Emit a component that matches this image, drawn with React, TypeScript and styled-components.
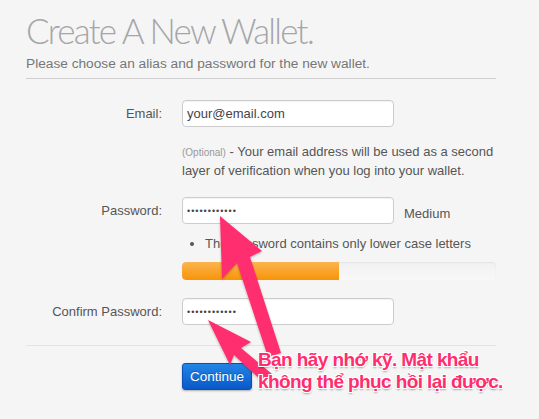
import styled, { createGlobalStyle } from "styled-components";

const GlobalStyle = createGlobalStyle`
  html, body {
    margin: 0;
    padding: 0;
    background: #f5f5f5;
  }
  body {
    font-family: "Liberation Sans", Arial, sans-serif;
    width: 539px;
    height: 419px;
    overflow: hidden;
  }
`;

export default function App() {
  return (
    <>
      <GlobalStyle />
      <Page>
        <Title>Create A New Wallet.</Title>
        <Subtitle>Please choose an alias and password for the new wallet.</Subtitle>
        <Rule />

        <Form>
          <Row>
            <Label>Email:</Label>
            <Input type="text" defaultValue="your@email.com" />
          </Row>

          <Help>
            <Muted>(Optional)</Muted> - Your email address will be used as a second
            <br />
            layer of verification when you log into your wallet.
          </Help>

          <Row $top={17}>
            <Label>Password:</Label>
            <FieldLine>
              <Input type="password" defaultValue="abcdefghijkl" $secret />
              <Strength>Medium</Strength>
            </FieldLine>
          </Row>

          <Tips>
            <li>The password contains only lower case letters</li>
          </Tips>

          <Progress>
            <Bar style={{ width: "50%" }} />
          </Progress>

          <Row $top={18}>
            <Label>Confirm Password:</Label>
            <Input type="password" defaultValue="abcdefghijkl" $secret />
          </Row>
        </Form>

        <Rule $light />

        <Actions>
          <Button>Continue</Button>
        </Actions>

        <Arrows width="539" height="419" viewBox="0 0 539 419">
          <defs>
            <filter id="sh" x="-20%" y="-20%" width="140%" height="140%">
              <feDropShadow dx="0" dy="1" stdDeviation="1.2" floodColor="#000" floodOpacity="0.3" />
            </filter>
          </defs>
          <g fill="#ff2d6e" filter="url(#sh)">
            <path d="M220 216 L262 251 L250 257 L281 353 L268 357 L237 263 L222 279 Z" />
            <path d="M208 320 L251 342 L241 348 L272 374 L264 383 L234 355 L230 365 Z" />
          </g>
        </Arrows>

        <Note>
          Bạn hãy nhớ kỹ. Mật khẩu
          <br />
          không thể phục hồi lại được.
        </Note>
      </Page>
    </>
  );
}

const Page = styled.div`
  position: relative;
  padding: 10px 43px 0 26px;
  height: 419px;
  box-sizing: border-box;
`;

const Title = styled.h1`
  margin: 0;
  font-family: Lato, Roboto, "Liberation Sans", sans-serif;
  font-weight: 300;
  font-size: 35px;
  line-height: 40px;
  color: #a6a6a8;
  letter-spacing: -1.8px;
`;

const Subtitle = styled.p`
  margin: 5px 0 0;
  font-size: 13.7px;
  line-height: 18px;
  color: #777;
`;

const Rule = styled.div<{ $light?: boolean }>`
  height: 1px;
  margin-top: ${(p) => (p.$light ? "20px" : "5px")};
  background: ${(p) => (p.$light ? "#e3e3e3" : "#cfcfcf")};
`;

const Form = styled.div`
  display: flex;
  flex-direction: column;
  padding-top: 21px;
`;

const Row = styled.div<{ $top?: number }>`
  display: grid;
  grid-template-columns: 136px 1fr;
  column-gap: 20px;
  align-items: center;
  margin-top: ${(p) => p.$top ?? 0}px;
`;

const Label = styled.label`
  text-align: right;
  font-size: 13px;
  color: #555;
`;

const FieldLine = styled.div`
  display: flex;
  align-items: center;
  gap: 10px;
`;

const Input = styled.input<{ $secret?: boolean }>`
  width: 212px;
  height: 27px;
  box-sizing: border-box;
  padding: 0 4px;
  border: 1px solid #cccccc;
  border-radius: 4px;
  background: #fff;
  font-family: "Liberation Sans", Arial, sans-serif;
  font-size: ${(p) => (p.$secret ? "9px" : "13px")};
  letter-spacing: ${(p) => (p.$secret ? "1px" : "0")};
  color: #444;
  box-shadow: inset 0 1px 1px rgba(0, 0, 0, 0.05);
  outline: none;
`;

const Strength = styled.span`
  font-size: 13px;
  color: #555;
  padding-top: 6px;
`;

const Help = styled.p`
  margin: 16px 0 0 156px;
  font-size: 13px;
  line-height: 18px;
  color: #555;
  white-space: nowrap;
`;

const Muted = styled.span`
  font-size: 10px;
  color: #999;
`;

const Tips = styled.ul`
  margin: 11px 0 0 156px;
  padding: 0 0 0 23px;
  font-size: 13px;
  line-height: 18px;
  color: #555;

  li {
    margin: 0;
  }
`;

const Progress = styled.div`
  margin: 9px 0 0 156px;
  height: 18px;
  border-radius: 4px;
  background: linear-gradient(#f1f1f1, #f8f8f8);
  box-shadow: inset 0 1px 2px rgba(0, 0, 0, 0.06);
  overflow: hidden;
`;

const Bar = styled.div`
  height: 100%;
  background: linear-gradient(#fbb450, #f89406);
  border-radius: 4px 0 0 4px;
`;

const Actions = styled.div`
  padding: 17px 0 0 156px;
`;

const Button = styled.button`
  width: 70px;
  height: 27px;
  padding: 0;
  border: 1px solid #0a4fb3;
  border-radius: 3px;
  background: linear-gradient(#2385e6, #0a58c8);
  color: #fff;
  font-family: "Liberation Sans", Arial, sans-serif;
  font-size: 13.5px;
  box-shadow: 0 1px 2px rgba(0, 0, 0, 0.3);
  text-shadow: 0 -1px 0 rgba(0, 0, 0, 0.25);
`;

const Arrows = styled.svg`
  position: absolute;
  left: 0;
  top: 0;
  pointer-events: none;
`;

const Note = styled.div`
  position: absolute;
  left: 258px;
  top: 349px;
  font-family: "Liberation Sans", Arial, sans-serif;
  font-weight: 700;
  font-size: 19px;
  line-height: 22px;
  letter-spacing: -0.6px;
  color: #ff2d6e;
  text-shadow:
    -1px -1px 0 #fff, 1px -1px 0 #fff, -1px 1px 0 #fff, 1px 1px 0 #fff,
    0 2px 2px rgba(0, 0, 0, 0.35);
  white-space: nowrap;
`;
